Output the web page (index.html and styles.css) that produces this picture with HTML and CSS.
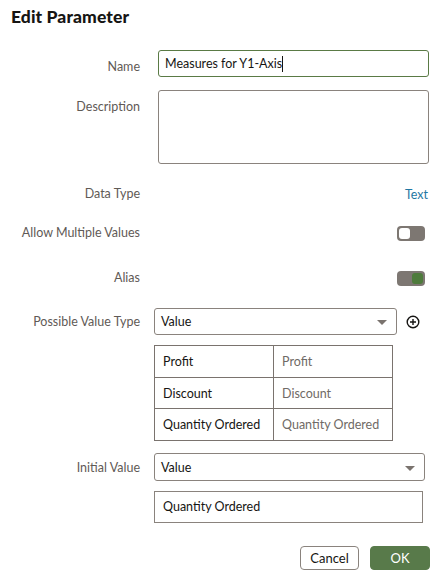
FILE: index.html
```html
<!DOCTYPE html>
<html lang="en">
<head>
<meta charset="utf-8">
<title>Edit Parameter</title>
<link rel="stylesheet" href="styles.css">
</head>
<body>
<div class="dialog">
  <h1 class="title">Edit Parameter</h1>
  <div class="form">
    <div class="row row-name">
      <div class="lbl">Name</div>
      <div class="field">
        <div class="input focused">Measures for Y1-Axis<span class="caret"></span></div>
      </div>
    </div>
    <div class="row row-desc">
      <div class="lbl">Description</div>
      <div class="field">
        <div class="textarea"></div>
      </div>
    </div>
    <div class="row row-type">
      <div class="lbl">Data Type</div>
      <div class="field field-end"><span class="link">Text</span></div>
    </div>
    <div class="row row-multi">
      <div class="lbl">Allow Multiple Values</div>
      <div class="field field-end"><span class="toggle off"><span class="knob"></span></span></div>
    </div>
    <div class="row row-alias">
      <div class="lbl">Alias</div>
      <div class="field field-end"><span class="toggle on"><span class="knob"></span></span></div>
    </div>
    <div class="row row-pvt">
      <div class="lbl">Possible Value Type</div>
      <div class="field field-inline">
        <div class="select select-short"><span>Value</span><span class="arrow"></span></div>
        <svg class="add" width="14" height="14" viewBox="0 0 14 14"><circle cx="7" cy="7" r="5.8" fill="none" stroke="#161513" stroke-width="1.4"/><path d="M7 4v6M4 7h6" stroke="#161513" stroke-width="1.4"/></svg>
      </div>
    </div>
    <div class="row row-table">
      <div class="lbl"></div>
      <div class="field">
        <table class="values">
          <tr><td class="k">Profit</td><td class="v">Profit</td></tr>
          <tr><td class="k">Discount</td><td class="v">Discount</td></tr>
          <tr><td class="k">Quantity Ordered</td><td class="v">Quantity Ordered</td></tr>
        </table>
      </div>
    </div>
    <div class="row row-init">
      <div class="lbl">Initial Value</div>
      <div class="field">
        <div class="select select-long"><span>Value</span><span class="arrow"></span></div>
      </div>
    </div>
    <div class="row row-qo">
      <div class="lbl"></div>
      <div class="field">
        <div class="input plain">Quantity Ordered</div>
      </div>
    </div>
    <div class="actions">
      <button class="btn cancel">Cancel</button>
      <button class="btn ok">OK</button>
    </div>
  </div>
</div>
</body>
</html>
```
FILE: styles.css
```css
html, body {
  margin: 0;
  padding: 0;
  background: #ffffff;
}
body {
  font-family: Lato, "Liberation Sans", sans-serif;
  color: #161513;
  width: 447px;
  height: 585px;
  overflow: hidden;
}
.dialog {
  padding: 6px 0 0 11px;
}
.title {
  margin: 0;
  font-size: 17.5px;
  line-height: 22px;
  font-weight: 900;
  color: #161513;
  letter-spacing: 0.1px;
}
.form {
  margin-top: 22px;
  margin-left: -11px;
}
.row {
  display: grid;
  grid-template-columns: 140px 1fr;
  column-gap: 14px;
}
.lbl {
  text-align: right;
  font-size: 12.5px;
  line-height: 16px;
  color: #5f5a56;
}
.field {
  font-size: 12.5px;
}
.field-end {
  display: flex;
  justify-content: flex-end;
  align-items: center;
  width: 274px;
}
.field-inline {
  display: flex;
  align-items: center;
}
.row-name .lbl, .row-desc .lbl { padding-top: 9px; }
.input {
  box-sizing: border-box;
  height: 27px;
  border: 1px solid #8a837d;
  border-radius: 3px;
  font-size: 12.5px;
  line-height: 25px;
  padding-left: 6px;
  color: #161513;
}
.focused {
  width: 271px;
  margin-left: 4px;
  border-color: #5a7a45;
}
.caret {
  display: inline-block;
  width: 1px;
  height: 16px;
  background: #161513;
  vertical-align: -4px;
}
.textarea {
  box-sizing: border-box;
  width: 271px;
  height: 74px;
  margin-left: 4px;
  border: 1px solid #8a837d;
  border-radius: 3px;
}
.row-desc { margin-top: 13px; }
.row-type { margin-top: 20px; align-items: center; height: 20px; }
.link { color: #1f77a3; font-size: 12.5px; }
.row-multi { margin-top: 19px; align-items: center; height: 20px; }
.row-alias { margin-top: 25px; align-items: center; height: 20px; }
.toggle {
  display: inline-flex;
  box-sizing: border-box;
  width: 28px;
  height: 15px;
  border-radius: 4px;
  background: #7d7772;
  padding: 2px;
  margin-right: 3px;
}
.toggle .knob {
  width: 11px;
  height: 11px;
  border-radius: 3px;
}
.toggle.off .knob { background: #ffffff; }
.toggle.on { justify-content: flex-end; }
.toggle.on .knob { background: #4e7b3c; }
.row-pvt { margin-top: 20px; }
.row-pvt .lbl { padding-top: 6px; }
.select {
  box-sizing: border-box;
  height: 27px;
  border: 1px solid #8a837d;
  border-radius: 3px;
  display: flex;
  align-items: center;
  justify-content: space-between;
  padding: 0 9px 0 6px;
  font-size: 12.5px;
  color: #161513;
}
.select-short { width: 243px; }
.select-long { width: 271px; height: 28px; }
.arrow {
  width: 0;
  height: 0;
  border-left: 5px solid transparent;
  border-right: 5px solid transparent;
  border-top: 5px solid #7a736e;
  margin-top: 2px;
}
.add { margin-left: 9px; }
.row-table { margin-top: 10px; }
.values {
  border-collapse: collapse;
  width: 239px;
  font-size: 12.5px;
}
.values td {
  border: 1px solid #7a736e;
  height: 31.7px;
  padding: 0 0 0 8px;
  box-sizing: border-box;
}
.values td.k { width: 119px; color: #161513; }
.values td.v { color: #6f6a66; }
.row-init { margin-top: 12px; }
.row-init .lbl { padding-top: 7px; }
.row-qo { margin-top: 10px; }
.plain {
  width: 269px;
  height: 32px;
  line-height: 30px;
  padding-left: 8px;
  border-radius: 0;
}
.actions {
  display: flex;
  justify-content: flex-end;
  gap: 11px;
  margin-top: 23px;
  width: 430px;
}
.btn {
  box-sizing: border-box;
  height: 24px;
  font-family: Lato, "Liberation Sans", sans-serif;
  font-size: 13px;
  border-radius: 4px;
  padding: 0;
  cursor: pointer;
}
.cancel {
  width: 59px;
  background: #ffffff;
  border: 1px solid #8a837d;
  color: #161513;
}
.ok {
  width: 60px;
  background: #587a4a;
  border: 1px solid #587a4a;
  color: #ffffff;
}
```
